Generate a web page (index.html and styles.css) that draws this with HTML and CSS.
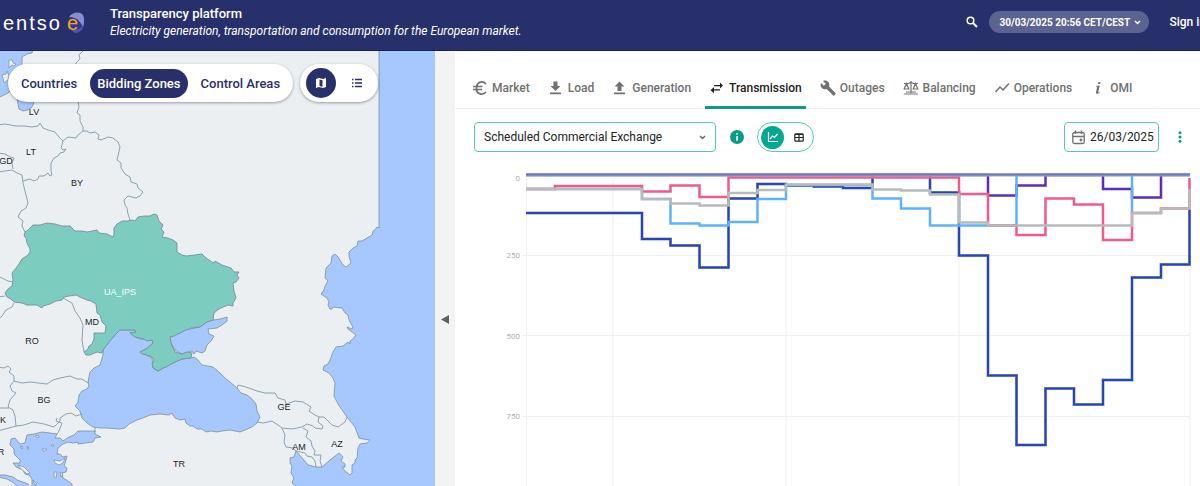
FILE: index.html
```
<!DOCTYPE html>
<html lang="en">
<head>
<meta charset="utf-8">
<title>Transparency platform</title>
<link rel="stylesheet" href="styles.css">
</head>
<body>
<header class="header">
  <a class="logo" href="#" aria-label="entsoe home">
    <svg class="logo-mark" viewBox="0 0 20 24" aria-hidden="true">
      <path d="M3 6C6 1 14 0 17 4c2 4 1 9 0 13C15 11 10 7 3 6z" fill="#8b8bd0"/>
      <path d="M4 13c4-3 9-3 13 2 0 4-4 7-7 7s-6-4-6-9z" fill="#4d55b0"/>
      <path d="M3 7c6-2 11 2 13 9-3 3-8 3-11 1z" fill="#303983"/>
    </svg>
    <span class="logo-text">entso<span class="logo-e">e</span></span>
  </a>
  <div class="title-block">
    <h1 class="title">Transparency platform</h1>
    <p class="subtitle">Electricity generation, transportation and consumption for the European market.</p>
  </div>
  <div class="header-tools">
    <button class="icon-button" type="button" aria-label="Search">
      <svg width="12" height="12" viewBox="0 0 12 12" fill="none" stroke="#fff"><circle cx="4.5" cy="4.5" r="3.3" stroke-width="1.5"/><path d="M7 7l4 4" stroke-width="1.9"/></svg>
    </button>
    <button class="clock" type="button">30/03/2025 20:56 CET/CEST
      <svg width="7" height="5" viewBox="0 0 7 5" fill="none" stroke="#fff" stroke-width="1.4" aria-hidden="true"><path d="M1 1l2.500 2.500L6 1"/></svg>
    </button>
    <a class="sign-in" href="#">Sign in</a>
  </div>
</header>
<main class="main">
  <section class="map-panel" aria-label="Bidding zone map">
    <svg class="map" viewBox="0 51 435 435" preserveAspectRatio="xMinYMin slice">
      <rect class="land" x="-2" y="45" width="500" height="450"/>
      <!-- Caspian Sea and the eastern map edge -->
      <path class="sea" d="M379 45L379 228 377 227 375 230 373 231 372 235 367 238 362 241 358 241 357 246 353 248 349 252 349 256 351 263 346 267 343 265 338 257 335 254 332 256 331 263 326 268 325 278 328 281 325 286 324 290 321 294 327 298 329 302 328 305 330 309 332 309 333 307 342 308 345 313 348 315 349 320 353 327 352 329 347 327 348 329 356 335 353 339 350 341 350 344 348 342 343 346 336 347 333 352 330 360 328 364 324 366 323 370 329 373 333 378 335 383 334 396 338 404 347 417 355 427 359 438 363 439 370 440 367 443 360 444 358 448 357 458 355 460 355 463 352 465 352 473 350 475 345 471 342 467 345 467 345 464 341 461 343 457 339 453 330 460 322 467 316 467 308 465 303 459 296 451 294 457 290 458 290 463 292 466 291 473 294 478 292 483 296 486 296 495H500V45z"/>
      <!-- Baltic Sea -->
      <path class="sea" d="M-2 45L34 45 32 53 27 54 22 57 22 65 23 72 20 82 8 93 0 97-2 97z"/>
      <path class="sea" d="M17 98L18 104 19 109 23 111 28 110 32 107 34 102 34 98z"/>
      <path class="land outlined" d="M9 60L12 60 13 63 16 64 14 66 12 65 9 68zM2 75L6 74 7 71 9 76 8 80 4 83 3 78z"/>
      <!-- Black Sea -->
      <path class="sea" d="M103 355L103 350 109 342 115 335 120 330 135 330 136 332 130 333 135 337 140 339 152 340 153 343 146 349 140 352 152 358 153 368 158 371 173 363 182 359 191 358 194 357 198 360 202 365 213 367 220 373 225 378 230 382 237 388 241 393 247 395 252 399 256 404 257 411 260 417 257 423 252 427 245 430 240 432 230 430 222 431 217 432 211 431 206 432 202 429 197 429 193 426 190 426 186 423 185 419 180 420 175 418 173 415 172 413 169 415 160 414 150 415 143 418 137 420 129 424 125 428 119 429 107 428 100 428 93 427 87 423 82 418 80 411 75 406 78 402 79 395 82 391 87 389 89 386 88 382 90 372 94 368 100 365z"/>
      <!-- Sea of Azov -->
      <path class="sea" d="M170 337L177 334 185 330 200 327 207 322 213 320 220 319 224 318 227 317 227 321 222 325 217 328 208 329 209 334 214 336 211 341 207 345 205 351 202 353 196 351 194 354 192 351 182 354 175 350 171 343z"/>
      <!-- Aegean Sea and Sea of Marmara -->
      <path class="sea" d="M15 438L11 439 10 445 14 449 14 454 20 460 20 463 13 463 16 467 23 470 25 474 29 475 32 479 32 490 72 490 72 484 68 481 63 478 62 473 66 472 67 468 64 466 66 460 67 456 63 457 60 454 57 454 58 448 63 444 68 442 73 443 78 442 78 444 93 442 95 438 101 437 95 434 95 431 78 431 74 435 69 437 63 441 60 438 55 438 57 434 50 433 42 432 34 434 27 435 25 443 20 444z"/>
      <path class="sea" d="M-2 475L5 475 13 477 17 480 23 482 28 484 29 490 20 490 14 483 7 479-2 477z"/>
      <path class="land outlined" d="M36 435L39 436 38 438 36 437zM20 446L23 447 22 449zM27 446L29 448 28 450zM42 449L47 449 45 451 43 451zM51 445L54 445 53 447zM54 460L60 461 65 458 63 463 59 465 55 463zM54 472L57 472 56 478 54 477zM60 472L63 474 61 477zM18 465L24 467 30 473 27 474 21 469zM33 480L37 484 35 485z"/>
      <path class="zone-active" d="M25 232L28 230 33 225 40 225 47 223 55 224 62 226 70 226 75 231 82 231 87 232 97 230 99 233 107 234 113 237 114 234 114 228 117 224 122 221 128 221 132 220 135 221 138 217 144 216 150 216 154 214 157 215 159 221 163 225 161 229 164 232 162 237 168 238 173 240 177 243 177 252 182 255 186 256 195 255 202 254 206 258 212 262 214 263 215 261 222 265 231 268 234 272 239 272 237 275 239 278 236 282 233 283 234 291 236 298 233 303 233 306 228 305 221 308 219 309 214 313 213 320 207 322 200 327 191 328 184 331 178 334 174 336 170 337 171 343 175 352 182 354 187 352 192 353 191 358 182 359 173 363 166 367 163 368 158 371 153 368 152 364 154 360 152 357 147 355 142 354 140 352 146 349 153 343 152 340 147 341 144 339 135 337 130 333 136 332 135 330 120 330 115 335 109 342 103 350 102 353 97 352 90 355 86 355 84 352 88 349 89 346 92 344 94 339 94 333 99 333 105 333 106 326 102 322 100 315 97 313 96 304 91 301 87 300 80 297 76 295 69 296 64 297 62 300 56 301 50 304 43 306 42 308 37 305 27 305 22 303 14 302 11 299 7 297 5 293 8 289 12 286 13 280 12 273 17 267 22 259 28 255 30 252 30 249 27 243 26 238 24 236z"/>
      <g class="borders">
        <path d="M83 51L79 55 80 59 76 63 76 67M78 101L79 107 77 113 80 115 80 121 83 127 83 131"/>
        <path d="M-2 125L5 124 16 126 25 126 32 127 38 126 40 123 43 128 48 130 55 132 59 137 63 141 68 137 76 138 78 135 83 131 87 131 90 133 95 132 99 135 98 139 101 140 108 137 113 138 118 142 120 147 117 160 121 163 121 168 125 174 130 177 131 182 137 184 138 188 143 192 140 196 136 198 128 196 124 200 125 205 127 208 128 214 130 220"/>
        <path d="M63 141L61 148 63 150 66 149 64 152 60 153 58 156 54 158 51 163 51 171 52 175 50 176 48 173 44 176 39 176 38 179 34 181 30 179 23 181M-2 153L5 154 10 157 14 158 12 163 13 169M-2 172L12 170 17 173 22 175 23 183 28 203 26 208 21 211 18 217 23 221 22 226 25 232"/>
        <path d="M-2 276L4 279 8 281 13 282M-2 297L5 296M14 303L12 307 6 310 2 316-1 319M63 298L72 303 75 311 80 318 83 325 82 340 84 352"/>
        <path d="M-2 367L4 368 8 366 11 369 9 372 14 376 14 381 22 383 30 382 47 384 53 380 60 378 70 376 77 379 82 379 88 383M14 381L10 386 12 391 16 393 10 400 8 407 13 410 15 416 16 426 24 425 33 422 44 424 54 427 60 421 60 418 66 414 71 413 76 416 82 414M-2 408L9 408M16 426L9 428 5 429-2 431M57 418L56 421 62 423 59 431 57 434"/>
        <path d="M95 427L95 432M237 388L238 385 246 387 257 391 265 393 275 393 278 398 285 400 286 404 295 401 303 402 311 407 309 411 315 415 319 417 324 417 332 425 338 427 345 422 347 417M257 422L263 423 272 421 278 425 282 428 292 429 302 427 307 424 313 426 315 428 322 429 323 426 318 422 319 417"/>
        <path d="M282 428L285 435 284 442 286 447 293 448 296 451 305 453 307 456 312 457 315 461 316 467M303 428L308 431 306 437 311 441 312 446 315 451 314 455 321 455 320 461 322 467"/>
      </g>
      <g class="map-labels">
        <text x="34" y="115">LV</text><text x="31" y="155">LT</text><text x="6" y="164">GD</text><text x="77" y="186">BY</text>
        <text x="92" y="325">MD</text><text x="32" y="344">RO</text><text x="44" y="403">BG</text><text x="3" y="423">K</text><text x="1" y="455">R</text>
        <text x="179" y="467">TR</text><text x="284" y="410">GE</text><text x="299" y="450">AM</text><text x="337" y="447">AZ</text>
        <text class="label-active" x="120" y="295">UA_IPS</text>
      </g>
    </svg>
    <div class="map-controls">
      <div class="pill" role="group" aria-label="Area type">
        <button class="pill-option" type="button">Countries</button>
        <button class="pill-option pill-option-active" type="button" aria-pressed="true">Bidding Zones</button>
        <button class="pill-option" type="button">Control Areas</button>
      </div>
      <div class="pill pill-view" role="group" aria-label="View">
        <button class="round round-active" type="button" aria-label="Map view" aria-pressed="true">
          <svg width="12" height="12" viewBox="0 0 12 12"><path fill="#fff" fill-rule="evenodd" d="M1 2l3-1 4 1 3-1v9l-3 1-4-1-3 1zM4.500 2.500v6.500l3 .8V3.300z"/></svg>
        </button>
        <button class="round" type="button" aria-label="List view">
          <svg width="12" height="10" viewBox="0 0 12 10" stroke="#27306b" stroke-width="1.300"><path d="M1 1.500h1.500M1 5h1.500M1 8.500h1.500M4 1.500h7M4 5h7M4 8.500h7"/></svg>
        </button>
      </div>
    </div>
  </section>
  <button class="splitter" type="button" aria-label="Collapse map">
    <svg width="8" height="9" viewBox="0 0 8 9"><path d="M0 4.500L8 0v9z" fill="#606060"/></svg>
  </button>
  <section class="data-panel">
    <nav class="tabs" aria-label="Data categories">
      <a class="tab" href="#"><svg class="tab-icon" viewBox="0 0 16 16" fill="none" stroke="currentColor" stroke-width="1.700"><path d="M14 4C11 .8 5 1 4.500 8S11 15.200 14 12M1 6.500h9.500M1 9.500h9"/></svg>Market</a>
      <a class="tab" href="#"><svg class="tab-icon" viewBox="0 0 16 16" fill="currentColor"><path d="M5.500 1.500h4v4.500h3l-5 5-5-5h3zM2 12.500h11v1.700H2z"/></svg>Load</a>
      <a class="tab" href="#"><svg class="tab-icon" viewBox="0 0 16 16" fill="currentColor"><path d="M5.500 11h4V6.500h3l-5-5-5 5h3zM2 12.500h11v1.700H2z"/></svg>Generation</a>
      <a class="tab tab-active" href="#" aria-current="page"><svg class="tab-icon" viewBox="0 0 16 16" fill="currentColor"><path d="M5 5h6V2.500l3 3-3 3V6.200H5zM11 9.200H5V7l-3.500 3.200L5 13.200V10.600h6z"/></svg>Transmission</a>
      <a class="tab" href="#"><svg class="tab-icon" viewBox="0 0 16 16" fill="currentColor"><path d="M15.500 13L9 6.500c.8-1.800.3-3.500-1-4.800C6.700.4 4.600 0 3 .9l2.800 2.800-2 2L1 2.900c-.8 1.700-.5 3.700.9 5 1.300 1.300 3.200 1.700 4.800 1l6.500 6.500c.3.300.7.300 1 0l1.300-1.400c.3-.3.300-.7 0-1z"/></svg>Outages</a>
      <a class="tab" href="#"><svg class="tab-icon" viewBox="0 0 16 16" fill="none" stroke="currentColor" stroke-width="1.200"><path d="M8 1v12M1 14h14M3 12h10M1 3.500h4.500L8 2.500l2.500 1H15M3.500 3.500L1.200 9h4.600zM12.500 3.500L10.200 9h4.600z"/></svg>Balancing</a>
      <a class="tab" href="#"><svg class="tab-icon" viewBox="0 0 16 16" fill="none" stroke="currentColor" stroke-width="1.500"><path d="M1.500 12l4.500-5 3 3 6-6.500"/></svg>Operations</a>
      <a class="tab" href="#"><svg class="tab-icon" viewBox="0 0 16 16" fill="currentColor"><path d="M8.500 2h2L10 4H8zM6 6l3.800-.5-1.600 6.500c-.1.700.4.600 1.300-.2l.3.400C8 14.500 5.500 14.200 6 12l1.300-5.200H6z"/></svg>OMI</a>
    </nav>
    <div class="filters">
      <div class="select-wrap">
        <select class="select" aria-label="Data view"><option>Scheduled Commercial Exchange</option></select>
        <svg class="select-chevron" width="7" height="5" viewBox="0 0 7 5" fill="none" stroke="#606060" stroke-width="1.300" aria-hidden="true"><path d="M1 1l2.500 2.500L6 1"/></svg>
      </div>
      <button class="icon-button" type="button" aria-label="Information">
        <svg width="14" height="14" viewBox="0 0 14 14"><circle cx="7" cy="7" r="7" fill="#0b9c86"/><path d="M6.300 3.200h1.500v1.600H6.300zM6.300 6h1.500v4.800H6.300z" fill="#fff"/></svg>
      </button>
      <div class="mode" role="group" aria-label="Display mode">
        <button class="mode-option mode-option-active" type="button" aria-label="Chart" aria-pressed="true">
          <svg width="12" height="12" viewBox="0 0 12 12" fill="none" stroke="#fff"><path d="M1.500 1v9.500H11M3 8l2.500-3 2 1.500 3-3.500" stroke-width="1.200"/></svg>
        </button>
        <button class="mode-option" type="button" aria-label="Table">
          <svg width="10" height="9" viewBox="0 0 10 9" fill="none" stroke="#222" stroke-width="1.200"><rect x=".8" y=".8" width="8.400" height="7.400" rx="1"/><path d="M1 1.500h8M1 4.500h8M5 1.500v6.500"/></svg>
        </button>
      </div>
      <label class="date">
        <svg width="13" height="15" viewBox="0 0 13 15" fill="none" stroke="#707070" stroke-width="1.300" aria-hidden="true"><rect x=".8" y="2.500" width="11.400" height="11" rx="1.500"/><path d="M1 6.500h11M3.500 .5v3.500M9.500 .5v3.500"/><circle cx="9" cy="10" r=".8" fill="#707070"/></svg>
        <input class="date-input" type="text" value="26/03/2025" aria-label="Date">
      </label>
      <button class="icon-button" type="button" aria-label="More options">
        <svg width="4" height="12" viewBox="0 0 4 12" fill="#0b9c86"><circle cx="2" cy="1.700" r="1.500"/><circle cx="2" cy="6" r="1.500"/><circle cx="2" cy="10.300" r="1.500"/></svg>
      </button>
    </div>
    <svg class="chart" viewBox="455 162 745 324" role="img" aria-label="Scheduled commercial exchange by hour">
      <path class="grid" d="M613 178V490M786 178V490M959 178V490M1190 178V490M522 255.500H1190M522 335.500H1190M522 416.500H1190M526.500 178V490"/>
      <g class="axis"><text x="520" y="181">0</text><text x="520" y="258">250</text><text x="520" y="339">500</text><text x="520" y="419">750</text></g>
      <path class="series violet" d="M526 175H988V195.500H1016.500V185.500H1045.500V175H1103V189H1132V197.500H1161V175H1190"/>
      <path class="series halo" d="M526 213H642V239H670.500V245.500H699.500V267.500H728.500V198.500H757.500V184H786V185.500H814V186.500H843V188H872.500V175H930V192.500H959V255.500H988V375.500H1016.500V445H1045.500V388.500H1074V404.500H1103V380H1132V277.500H1161V264.500H1189.500V209"/>
      <path class="series navy" d="M526 213H642V239H670.500V245.500H699.500V267.500H728.500V198.500H757.500V184H786V185.500H814V186.500H843V188H872.500V175H930V192.500H959V255.500H988V375.500H1016.500V445H1045.500V388.500H1074V404.500H1103V380H1132V277.500H1161V264.500H1189.500V209"/>
      <path class="series sky" d="M526 189H642V199H670.500V223.500H699.500V225.500H728.500V222H757.500V199H786V185H872.500V198.500H901V208.500H930V225.500H1016.500V175H1132V213"/>
      <path class="series pink" d="M526 189H555V186H642V191.500H670.500V185.500H699.500V197H728.500V177.500H959V194H988V225.500H1016.500V235H1045.500V198.500H1074V204.500H1103V240H1132V213H1161V208.500H1189.500V178"/>
      <path class="series gray" d="M526 189H642V199H670.500V203.500H699.500V205.500H728.500V193H757.500V190H786V184.500H872.500V189.500H901V190.500H930V194.500H959V222.500H988V225.500H1132V213H1161V208.500H1189.500V189"/>
      <path class="series baseline-shadow" d="M526 175H1190"/>
      <path class="series baseline" d="M526 174.500H1190"/>
    </svg>
  </section>
</main>
</body>
</html>
```
FILE: styles.css
```
* { box-sizing: border-box; }
body {
  margin: 0;
  height: 100vh;
  display: flex;
  flex-direction: column;
  overflow: hidden;
  background: #fff;
  color: #222;
  font-family: Roboto, "Liberation Sans", sans-serif;
  font-size: 12px;
}
button { border: 0; padding: 0; margin: 0; background: none; font: inherit; color: inherit; cursor: pointer; }
a { color: inherit; text-decoration: none; }
svg { display: block; flex: none; }

.header {
  flex: none;
  display: flex;
  align-items: flex-start;
  height: 51px;
  overflow: hidden;
  background: #27306b;
  border-bottom: 1px solid #1b2158;
  color: #fff;
  white-space: nowrap;
}
.logo { position: relative; flex: none; width: 110px; padding: 11px 0 0 3px; }
.logo-text { position: relative; font: 20px/24px "Liberation Sans", sans-serif; letter-spacing: 2px; }
.logo-e { margin-left: 5px; color: #f5a81c; }
.logo-mark { position: absolute; left: 66px; top: 11px; width: 20px; height: 24px; }
.title-block { flex: 1 0 auto; padding-top: 5px; }
.title { margin: 0; font-size: 13px; line-height: 18px; font-weight: 500; }
.subtitle { margin: 0; font-size: 12px; line-height: 17px; font-style: italic; }
.header-tools { display: flex; align-items: center; flex: none; margin-right: -6px; padding-top: 11px; }
.icon-button { display: flex; flex: none; }
.clock {
  display: flex;
  align-items: center;
  justify-content: space-between;
  width: 160px;
  height: 22px;
  margin: 0 20px 0 11px;
  padding: 0 8px 0 10px;
  border-radius: 11px;
  background: #5b6390;
  font-size: 10px;
  font-weight: 700;
}
.sign-in { font-weight: 500; }

.main { flex: 1; display: flex; min-height: 0; }
.map-panel { position: relative; flex: 0 0 36.25%; min-width: 0; overflow: hidden; background: #a6c8ff; }
.map { width: 100%; height: 100%; }
.land { fill: #ebeff2; }
.sea { fill: #a6c8ff; stroke: #78909c; stroke-width: 0.800; stroke-linejoin: round; }
.outlined { stroke: #78909c; stroke-width: 0.700; }
.zone-active { fill: #7cccbf; stroke: #78909c; stroke-width: 0.900; stroke-linejoin: round; }
.borders { fill: none; stroke: #8299a6; stroke-width: 0.900; stroke-linejoin: round; }
.map-labels { font: 9px "Liberation Sans", sans-serif; fill: #222; text-anchor: middle; }
.label-active { fill: #fff; }

.map-controls { position: absolute; left: 8px; top: 13px; display: flex; gap: 7px; }
.pill {
  display: flex;
  align-items: center;
  height: 38px;
  padding: 0 6px;
  border-radius: 19px;
  background: #fff;
  box-shadow: 0 1px 3px rgba(0, 0, 0, 0.35);
  color: #27306b;
  font-size: 13px;
  font-weight: 500;
  white-space: nowrap;
}
.pill-view { gap: 6px; }
.pill-option { height: 29px; padding: 0 7px; border-radius: 15px; }
.pill-option + .pill-option { margin-left: 6px; }
.pill-option-active { background: #27306b; color: #fff; }
.round { display: flex; align-items: center; justify-content: center; width: 30px; height: 30px; border-radius: 50%; }
.round-active { background: #27306b; }

.splitter { flex: 0 0 20px; display: flex; align-items: flex-start; justify-content: center; padding-top: 264px; background: #f3f3f3; }

.data-panel { flex: 1; min-width: 0; overflow: hidden; }
.tabs {
  display: flex;
  gap: 10px;
  height: 58px;
  padding: 15px 13px 0;
  border-bottom: 1px solid #efefef;
  color: #707070;
  font-weight: 500;
}
.tab { display: flex; align-items: center; gap: 4px; height: 43px; padding: 0 4px; border: solid transparent; border-width: 3px 0; white-space: nowrap; }
.tab-active { color: #222; border-bottom-color: #0b9c86; }
.tab-icon { width: 16px; height: 16px; }

.filters { display: flex; align-items: center; padding: 13px 18px 10px 19px; }
.select-wrap { position: relative; flex: 0 1 242px; margin-right: 14px; }
.select {
  display: block;
  width: 100%;
  height: 30px;
  padding: 0 24px 0 9px;
  border: 1px solid #55c9b5;
  border-radius: 4px;
  background: #fff;
  color: #222;
  font: 12px Roboto, sans-serif;
  appearance: none;
}
.select-chevron { position: absolute; right: 10px; top: 13px; pointer-events: none; }
.mode { display: flex; align-items: center; gap: 3px; height: 30px; margin-left: 13px; padding: 0 3px; border: 1px solid #55c9b5; border-radius: 15px; }
.mode-option { display: flex; align-items: center; justify-content: center; width: 23px; height: 23px; border-radius: 50%; }
.mode-option-active { background: #00a88f; }
.date { display: flex; align-items: center; gap: 5px; width: 95px; height: 30px; margin: 0 19px 0 auto; padding-left: 7px; border: 1px solid #55c9b5; border-radius: 4px; }
.date-input { flex: 1; min-width: 0; padding: 0; border: 0; background: none; color: #222; font: 12px Roboto, sans-serif; }

.chart { width: 100%; height: auto; }
.grid { fill: none; stroke: #efefef; stroke-width: 1; }
.axis { font: 8px Roboto, sans-serif; fill: #b0b0b0; text-anchor: end; }
.series { fill: none; stroke-width: 2.500; }
.violet { stroke: #5a2fb5; }
.halo { stroke: #7f9fdc; stroke-width: 3; }
.navy { stroke: #2c44ae; stroke-width: 2; }
.sky { stroke: #5cb3fb; }
.pink { stroke: #f05a8c; }
.gray { stroke: #b7bbb9; }
.baseline-shadow { stroke: #a5aaba; stroke-width: 3; }
.baseline { stroke: #6577c3; stroke-width: 2; }
```
